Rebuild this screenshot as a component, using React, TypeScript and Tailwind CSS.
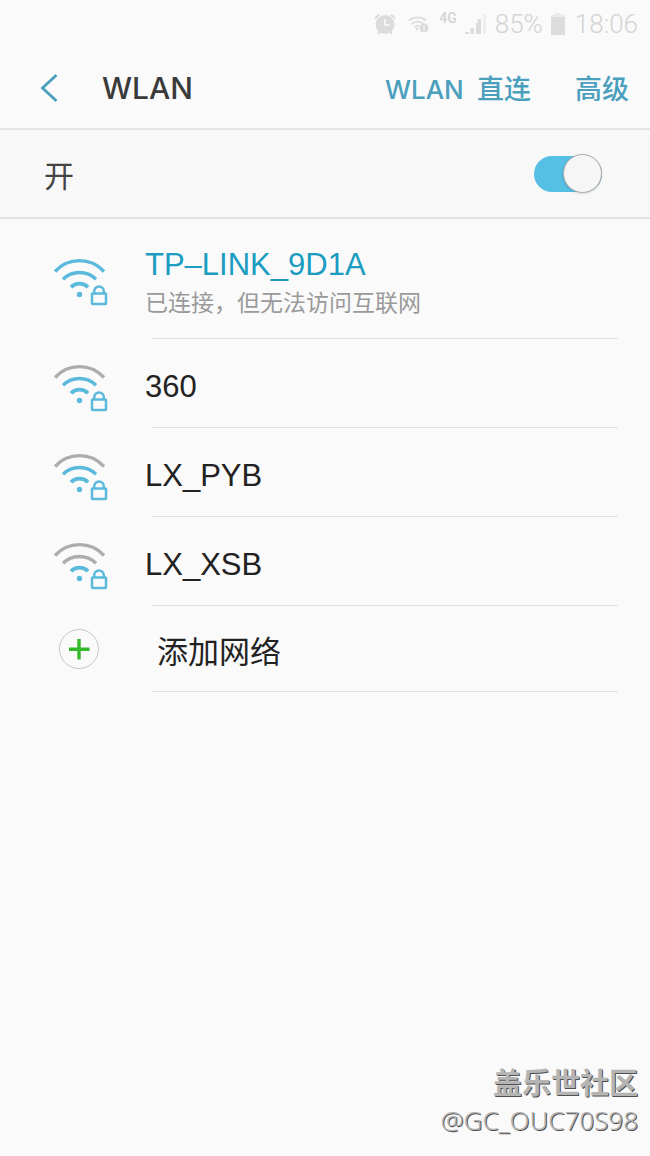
import { useState } from 'react';

interface Network {
  ssid: string;
  strength: 1 | 2 | 3;
  status?: string;
}

const networks: Network[] = [
  { ssid: 'TP–LINK_9D1A', strength: 3, status: '已连接，但无法访问互联网' },
  { ssid: '360', strength: 2 },
  { ssid: 'LX_PYB', strength: 2 },
  { ssid: 'LX_XSB', strength: 1 },
];

const BLUE = '#5bbadb';
const GRAY = '#adadad';

function WifiLockIcon({ strength }: { strength: number }) {
  return (
    <svg viewBox="0 0 56 52" className="h-[52px] w-14" fill="none" strokeWidth="3.4" aria-hidden="true">
      <path d="M3 15.5A33 33 0 0 1 52 15.5" stroke={strength > 2 ? BLUE : GRAY} />
      <path d="M11 23.3A23.5 23.5 0 0 1 44 23.3" stroke={strength > 1 ? BLUE : GRAY} />
      <path d="M19 31.2A11.8 11.8 0 0 1 36 31.2" stroke={BLUE} strokeWidth="3.8" />
      <circle cx="27.5" cy="38.5" r="2.7" fill={BLUE} />
      <rect x="40" y="37.5" width="14" height="10.5" rx="0.5" stroke={BLUE} strokeWidth="2.5" />
      <path d="M42.2 37V35.2a4.8 4.8 0 0 1 9.6 0V37" stroke={BLUE} strokeWidth="2.5" />
    </svg>
  );
}

function StatusBar() {
  return (
    <div className="flex h-12 items-center justify-end pr-3 font-['Roboto',sans-serif] text-[26px] font-light text-[#d4d4d4]">
      {/* Alarm */}
      <svg viewBox="0 0 22 22" className="mr-3 h-[22px] w-[22px]" aria-hidden="true">
        <circle cx="11" cy="11.5" r="9.4" fill="#dcdcdc" />
        <path d="M1 5.5 5 1.5M21 5.5l-4-4M4 21l2-3M18 21l-2-3" stroke="#dcdcdc" strokeWidth="2" />
        <path d="M11 6v6h5" stroke="#fafafa" strokeWidth="1.6" fill="none" />
      </svg>
      {/* Wi-Fi with alert */}
      <svg viewBox="0 0 21 18" className="mr-2.5 h-[18px] w-[21px]" fill="none" aria-hidden="true">
        <path d="M1 5.5a13 13 0 0 1 17 0M3.5 9a9 9 0 0 1 12 0M6.5 12a5 5 0 0 1 5-1" stroke="#dcdcdc" strokeWidth="1.8" />
        <circle cx="9" cy="14" r="1.4" fill="#dcdcdc" />
        <circle cx="16" cy="13" r="4.5" fill="#dcdcdc" />
        <path d="M16 10.5v3M16 14.5v1" stroke="#fafafa" strokeWidth="1.2" />
      </svg>
      <span className="mr-2 self-start pt-2.5 text-sm leading-4 font-medium">4G</span>
      <svg viewBox="0 0 22 20" className="mr-2 h-5 w-[22px]" fill="#dcdcdc" aria-hidden="true">
        <path d="M0 18h4v2H0ZM5.5 14h3.5v6h-3.5ZM11 9h4v11h-4Z" />
        <path d="M12.5 5h3.5v15h-3.5Z" />
        <path d="M18 0h3v20h-3Z" fill="#eeeeee" />
      </svg>
      <span>85%</span>
      <svg viewBox="0 0 14 22" className="mr-2.5 ml-2 h-[22px] w-3.5" fill="#dcdcdc" aria-hidden="true">
        <path d="M4 0h6v2h4v3H0V2h4Z" fill="#ebebeb" />
        <path d="M0 4h14v18H0Z" />
      </svg>
      <span>18:06</span>
    </div>
  );
}

export default function App() {
  const [enabled, setEnabled] = useState(true);

  return (
    <div className="flex min-h-screen flex-col bg-[#fafafa] font-['Liberation_Sans','Noto_Sans_CJK_SC',sans-serif] text-[#222222]">
      <StatusBar />

      <header className="flex h-[82px] items-center border-b-2 border-[#e5e5e5] pr-[21px] pl-10 font-['Inter','Noto_Sans_CJK_SC',sans-serif]">
        <button type="button" aria-label="返回" className="mr-11">
          <svg viewBox="0 0 18 30" className="h-[30px] w-[18px]" fill="none" aria-hidden="true">
            <path d="M16.5 2 2.5 15l14 13" stroke="#4a9fbd" strokeWidth="2.8" />
          </svg>
        </button>
        <h1 className="text-[30px] font-medium text-[#3a3a3a]">WLAN</h1>
        <nav className="ml-auto flex items-center gap-11 pt-1 text-[27px] font-medium text-[#4a9fbd]">
          <button type="button">
            <span className="mr-1.5 text-[26px]">WLAN</span> 直连
          </button>
          <button type="button">高级</button>
        </nav>
      </header>

      <label className="flex h-[89px] items-center justify-between border-b-2 border-[#e2e2e2] bg-[#f8f8f8] pr-12 pl-11 text-[30px] text-[#444444]">
        <span className="pt-1.5">开</span>
        <input
          type="checkbox"
          role="switch"
          checked={enabled}
          onChange={(e) => setEnabled(e.target.checked)}
          className="flex h-9 w-[68px] cursor-pointer appearance-none items-center rounded-full bg-[#c8c8c8] before:size-[39px] before:shrink-0 before:rounded-full before:border before:border-[#aaaaaa] before:bg-[#f6f6f6] before:shadow-sm checked:justify-end checked:bg-[#56bfe4]"
        />
      </label>

      <ul className="pr-8 pl-[52px]">
        {networks.map((network) => (
          <li key={network.ssid}>
            <button type="button" className="flex w-full text-left">
              <span className={network.status ? 'pt-[37px]' : 'pt-[23px]'}>
                <WifiLockIcon strength={network.strength} />
              </span>
              {network.status ? (
                <span className="ml-[43px] flex h-[120px] flex-1 flex-col border-b border-[#e2e2e2] pt-6">
                  <span className="-ml-1.5 text-[31px] leading-11 text-[#1b9cc0]">{network.ssid}</span>
                  <span className="-ml-1.5 text-[23px] leading-8 text-[#9a9a9a]">{network.status}</span>
                </span>
              ) : (
                <span className="ml-[43px] flex h-[89px] flex-1 items-center border-b border-[#e2e2e2] pt-2">
                  <span className="-ml-1.5 text-[31px]">{network.ssid}</span>
                </span>
              )}
            </button>
          </li>
        ))}
        <li>
          <button type="button" className="flex w-full items-center text-left">
            <svg viewBox="0 0 40 40" className="ml-[7px] size-10" fill="none" aria-hidden="true">
              <circle cx="20" cy="20" r="19.5" stroke="#c6c6c6" />
              <path d="M20 10v20.5M10 20.3h20.5" stroke="#35b82a" strokeWidth="3.4" />
            </svg>
            <span className="ml-[52px] flex h-[86px] flex-1 items-center border-b border-[#e2e2e2] pt-2.5 pl-1.5 text-[31px]">
              添加网络
            </span>
          </button>
        </li>
      </ul>

      <footer className="mt-auto flex flex-col items-end pr-3 pb-5 text-[#b4b4b4] [text-shadow:1px_1px_0_#505050]">
        <span className="text-[29px] leading-10 font-bold">盖乐世社区</span>
        <span className="font-['Noto_Sans',sans-serif] text-[26px] leading-8 font-light">@GC_OUC70S98</span>
      </footer>
    </div>
  );
}
